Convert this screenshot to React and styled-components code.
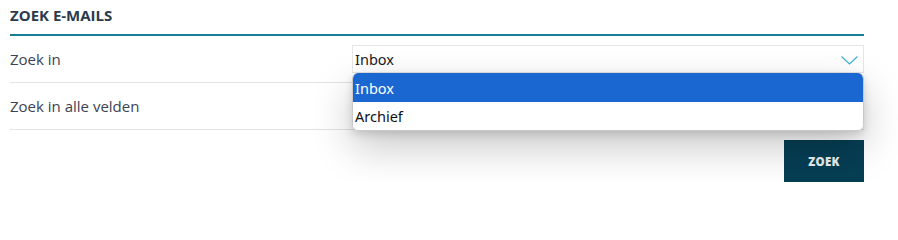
import React from "react";
import styled, { createGlobalStyle } from "styled-components";

const Global = createGlobalStyle`
  html, body { margin: 0; padding: 0; background: #fff; }
  body { font-family: "Open Sans", "Noto Sans", sans-serif; }
`;

const Page = styled.div`
  width: 854px;
  padding: 0 34px 0 10px;
  position: relative;
`;

const Heading = styled.h2`
  margin: 0;
  height: 36px;
  box-sizing: border-box;
  padding-top: 5px;
  border-bottom: 2px solid #167f95;
  font-size: 15px;
  font-weight: 700;
  line-height: 20px;
  color: #2b3a4d;
`;

const Row = styled.div`
  display: grid;
  grid-template-columns: 342px 1fr;
  align-items: center;
  height: ${(p) => p.$h}px;
  border-bottom: 1px solid #e3e3e3;
  position: relative;
`;

const Label = styled.span`
  font-size: 15px;
  color: #3b4452;
  line-height: 20px;
`;

const SelectBox = styled.div`
  position: relative;
  height: 28px;
  box-sizing: border-box;
  border: 1px solid #e6e6e6;
  display: flex;
  align-items: center;
  padding-left: 2px;
  font-family: "Noto Sans", "Open Sans", sans-serif;
  font-size: 14.5px;
  color: #1a1a1a;
`;

const Chevron = styled.svg`
  position: absolute;
  right: 5px;
  top: 10px;
`;

const Dropdown = styled.div`
  position: absolute;
  left: 342px;
  top: 37px;
  width: 512px;
  box-sizing: border-box;
  border-radius: 6px;
  background: #fff;
  border: 1px solid #c9c9c9;
  border-top: none;
  box-shadow: 0 16px 40px rgba(0, 0, 0, 0.22), 0 3px 8px rgba(0, 0, 0, 0.14);
  overflow: hidden;
  z-index: 5;
`;

const Option = styled.div`
  height: ${(p) => p.$h}px;
  display: flex;
  align-items: center;
  padding-left: 2px;
  font-family: "Noto Sans", "Open Sans", sans-serif;
  font-size: 14.5px;
  background: ${(p) => (p.$active ? "#1a67d2" : "#fff")};
  color: ${(p) => (p.$active ? "#fff" : "#111")};
`;

const Actions = styled.div`
  display: flex;
  justify-content: flex-end;
  padding-top: 10px;
`;

const Button = styled.button`
  width: 80px;
  height: 42px;
  border: none;
  background: #063e54;
  color: #e9eef1;
  font-family: "Open Sans", sans-serif;
  font-weight: 800;
  font-size: 11.5px;
  letter-spacing: 0.3px;
  cursor: pointer;
`;

export default function App() {
  return (
    <>
      <Global />
      <Page>
        <Heading>ZOEK E-MAILS</Heading>
        <Row $h={46}>
          <Label>Zoek in</Label>
          <SelectBox>
            Inbox
            <Chevron width="17" height="9" viewBox="0 0 17 9">
              <path d="M0.5 0.5 L8.5 8 L16.5 0.5" fill="none" stroke="#3fb0d8" strokeWidth="1.2" />
            </Chevron>
          </SelectBox>
          <Dropdown>
            <Option $active $h={29}>Inbox</Option>
            <Option $h={28}>Archief</Option>
          </Dropdown>
        </Row>
        <Row $h={46}>
          <Label>Zoek in alle velden</Label>
          <span />
        </Row>
        <Actions>
          <Button>ZOEK</Button>
        </Actions>
      </Page>
    </>
  );
}
